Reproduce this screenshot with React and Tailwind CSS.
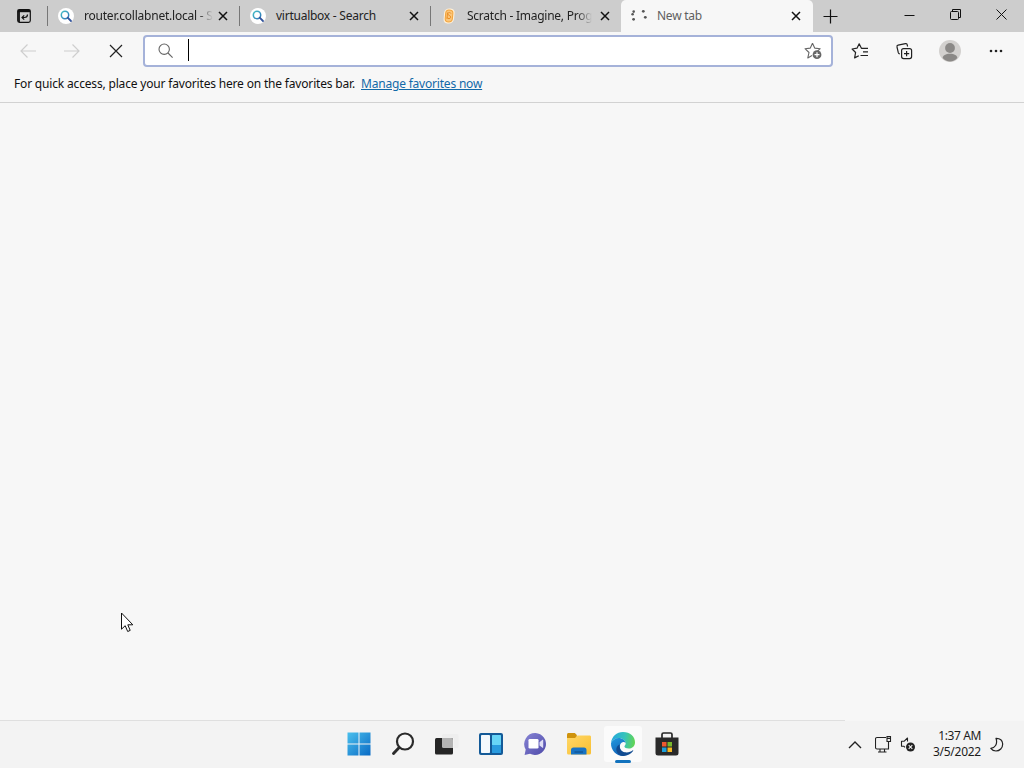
import clsx from "clsx";

const BingIcon = () => (
  <svg width="16" height="16" viewBox="0 0 16 16" fill="none">
    <defs>
      <linearGradient id="bing" x1="0" y1="0" x2="1" y2="1">
        <stop offset="0" stopColor="#45bfc6" />
        <stop offset="1" stopColor="#2f74b8" />
      </linearGradient>
    </defs>
    <circle cx="8" cy="8" r="8" fill="#fff" />
    <circle cx="7" cy="7" r="3.7" stroke="url(#bing)" strokeWidth="1.5" />
    <path d="M9.7 9.700l3.300 3.300" stroke="#33549c" strokeWidth="1.8" strokeLinecap="round" />
  </svg>
);

const ScratchIcon = () => (
  <svg width="16" height="16" viewBox="0 0 16 16" fill="none">
    <path
      d="M8.300.5c3.400 0 5.600 1.500 5.300 4.300l-.5 5.700c-.3 3.300-2.400 5-5.500 5-3.400 0-5.300-1.700-5-4.600L3.100 5C3.400 2.200 5.400.5 8.300.5z"
      fill="#fff0d8"
    />
    <path
      d="M7.900 2c2.700 0 4.200 1 4 3l-.5 5.500c-.2 2.500-1.600 3.500-3.700 3.500-2.500 0-3.700-1.200-3.500-3.200l.5-5.600C4.900 3 6.100 2 7.900 2z"
      fill="#fbc77c"
      stroke="#f2a53f"
      strokeWidth="1.100"
    />
    <path
      d="M10 5.600c-.3-1.400-3-1.500-3.200.1-.2 1.800 3 1.500 2.900 3.500-.1 1.900-3.300 1.800-3.500.2M6.500 4.500l-.5 6.500"
      stroke="#ec8f26"
      strokeWidth="1"
    />
  </svg>
);

const LoadingIcon = () => (
  <svg width="16" height="16" viewBox="0 0 16 16" fill="#555">
    <circle cx="2.700" cy="3.600" r="1.300" />
    <circle cx="1.600" cy="6.200" r="1.300" />
    <circle cx="2.600" cy="11.300" r="1.400" />
    <circle cx="12.300" cy="3.300" r="1.400" />
    <circle cx="14.300" cy="9.300" r="1.400" />
  </svg>
);

const CloseIcon = () => (
  <svg width="10" height="10" viewBox="0 0 10 10" stroke="#111" strokeWidth="1.500">
    <path d="M1 1l8 8M9 1L1 9" />
  </svg>
);

const tabs = [
  { title: "router.collabnet.local - S", icon: BingIcon, width: "w-[191px]", text: "tracking-[-0.22px] mask-r-from-88%" },
  { title: "virtualbox - Search", icon: BingIcon, width: "w-[190px]", text: "tracking-[-0.25px]" },
  { title: "Scratch - Imagine, Prog", icon: ScratchIcon, width: "w-[190px]", text: "tracking-[-0.25px] mask-r-from-88%" },
  { title: "New tab", icon: LoadingIcon, width: "w-[192px]", text: "tracking-[-0.25px]", active: true },
];

const Tab = ({ title, icon: Icon, width, text, active }) => (
  <div
    className={clsx(
      "flex items-center shrink-0 h-8 pl-[10px]",
      width,
      active ? "bg-[#f7f7f7] rounded-t-[5px] text-[#606060]" : "text-[#222]"
    )}
  >
    <Icon />
    <span className={clsx("ml-[10px] whitespace-nowrap text-[12px] leading-4", text)}>
      {title}
    </span>
    <span className={clsx("ml-auto", active ? "mr-[12px]" : "mr-[11px]")}>
      <CloseIcon />
    </span>
  </div>
);

const TabStrip = () => (
  <header className="flex items-center h-8 bg-[#cdcdcd]">
    <div className="flex justify-center w-[47px] shrink-0">
      <svg width="14" height="14" viewBox="0 0 14 14" fill="none" stroke="#111" strokeWidth="1.200">
        <rect x=".7" y=".7" width="12.600" height="12.600" rx="1.800" />
        <path d="M.7 2h12.600" strokeWidth="2.400" />
        <path d="M2 1v12" strokeWidth="1.800" />
        <path d="M10.500 5.500c0 2-1 3-3 3H5M7.200 6.300L5 8.500l2.200 2.200" strokeWidth="1.200" />
      </svg>
    </div>
    {tabs.map((tab) => (
      <div key={tab.title} className="flex items-center">
        {!tab.active && <span className="h-5 w-px bg-[#777]" />}
        <Tab {...tab} />
      </div>
    ))}
    <svg className="ml-[10px] shrink-0" width="15" height="15" viewBox="0 0 15 15" stroke="#111" strokeWidth="1.200">
      <path d="M7.500.5v14M.5 7.500h14" />
    </svg>
    <div className="flex ml-auto pb-[4px]">
      <div className="flex items-center justify-center w-[46px] h-7">
        <svg width="11" height="11" stroke="#111">
          <path d="M.5 6.500h10" />
        </svg>
      </div>
      <div className="flex items-center justify-center w-[46px] h-7">
        <svg width="11" height="11" fill="none" stroke="#111">
          <rect x=".5" y="2.500" width="8" height="8" rx="1" />
          <path d="M2.500 2.500v-2h8v8h-2" />
        </svg>
      </div>
      <div className="flex items-center justify-center w-[46px] h-7">
        <svg width="11" height="11" stroke="#111" strokeWidth="1">
          <path d="M.5.5l10 10M10.500.5l-10 10" />
        </svg>
      </div>
    </div>
  </header>
);

const Toolbar = () => (
  <div className="flex items-center h-[38px] pl-[6px]">
    <div className="flex justify-center w-11">
      <svg width="16" height="14" fill="none" stroke="#cecece" strokeWidth="1.200">
        <path d="M16 7H1M7.500.5L1 7l6.500 6.500" />
      </svg>
    </div>
    <div className="flex justify-center w-11">
      <svg width="16" height="14" fill="none" stroke="#cecece" strokeWidth="1.200">
        <path d="M0 7h15M8.500.5L15 7l-6.500 6.500" />
      </svg>
    </div>
    <div className="flex justify-center w-11">
      <svg width="14" height="14" stroke="#222" strokeWidth="1.200">
        <path d="M1 1l12 12M13 1L1 13" />
      </svg>
    </div>

    {/* Address bar */}
    <div className="flex items-center w-[690px] h-8 ml-[5px] pl-[13px] pr-[9px] bg-white border-2 border-[#a5b2d9] rounded-[4px]">
      <svg width="16" height="16" fill="none" stroke="#666" strokeWidth="1.100">
        <circle cx="6.200" cy="6.200" r="5.200" />
        <path d="M10 10l4.600 4.600" />
      </svg>
      <span className="ml-[14px] w-px h-[22px] mb-[2px] bg-black" />
      <svg className="ml-auto" width="18" height="18" viewBox="0 0 18 18" fill="none">
        <path
          d="M8.500 1.200l2.200 4.900 5.500.6-3.900 3.700M8.500 1.200L6.300 6.100l-5.300.6 4 3.800-1.200 5.400 4.200-2.300"
          stroke="#666"
          strokeWidth="1.100"
          strokeLinejoin="round"
        />
        <circle cx="13" cy="12.700" r="4.400" fill="#666" />
        <path d="M13 10.200v5M10.500 12.700h5" stroke="#fff" strokeWidth="1.200" />
      </svg>
    </div>

    <div className="flex justify-center w-[44px] ml-[5px]">
      <svg width="18" height="18" viewBox="0 0 18 18" fill="none" stroke="#222" strokeWidth="1.200" strokeLinejoin="round">
        <path d="M11 6.300l-.6-.1L8.200 1.800 6 6.200l-4.900.8 3.500 3.500-1 5.400 4.200-2.200" />
        <path d="M10.500 6.300h6.500M12 9.900h5M9.500 13.500h7.500" />
      </svg>
    </div>
    <div className="flex justify-center w-[44px]">
      <svg width="18" height="18" viewBox="0 0 18 18" fill="none" stroke="#222" strokeWidth="1.200">
        <rect x="6.600" y="6.600" width="10" height="10" rx="2" />
        <path d="M11.600 9v5.200M9 11.600h5.200" />
        <path d="M12.600 4.500l-.4-1.700c-.2-.9-.9-1.300-1.800-1.100L3.100 3.200c-.9.200-1.300.9-1.100 1.800l1.300 5.700c.2.700.6 1.100 1.500 1.200" />
      </svg>
    </div>
    <div className="flex justify-center w-[48px]">
      <svg width="22" height="22" viewBox="0 0 22 22">
        <circle cx="11" cy="11" r="11" fill="#d3d1cf" />
        <circle cx="11" cy="8" r="4.900" fill="#8b8987" />
        <path d="M3.700 18c0-2.500 3-4.200 7.300-4.200s7.300 1.700 7.300 4.200c-1.800 2.100-4.300 3.400-7.300 3.400S5.500 20.100 3.700 18z" fill="#8b8987" />
      </svg>
    </div>
    <div className="flex justify-center w-[44px]">
      <svg width="14" height="4" fill="#222">
        <circle cx="2" cy="2" r="1.300" />
        <circle cx="7" cy="2" r="1.300" />
        <circle cx="12" cy="2" r="1.300" />
      </svg>
    </div>
  </div>
);

const FavoritesBar = () => (
  <div className="flex h-[33px] pl-[14px] pt-[6px] border-b border-[#d2d2d2] text-[12px] leading-4 whitespace-nowrap">
    <span className="text-[#111] tracking-[-0.175px]">
      For quick access, place your favorites here on the favorites bar.
    </span>
    <a className="ml-[6px] text-[#1269a8] underline tracking-[-0.2px]">Manage favorites now</a>
  </div>
);

const StartIcon = () => (
  <svg width="24" height="24" viewBox="0 0 24 24">
    <defs>
      <linearGradient id="start" gradientUnits="userSpaceOnUse" x1="0" y1="0" x2="24" y2="24">
        <stop offset="0" stopColor="#4cc2ee" />
        <stop offset="1" stopColor="#0868c4" />
      </linearGradient>
    </defs>
    <path d="M.5.5h11v11H.5zM12.500.5h11v11h-11zM.5 12.500h11v11H.5zM12.500 12.500h11v11h-11z" fill="url(#start)" />
  </svg>
);

const SearchIcon = () => (
  <svg width="24" height="24" viewBox="0 0 24 24" fill="none" stroke="#2b2b2b">
    <circle cx="14" cy="9.500" r="8" strokeWidth="2.200" fill="#f8f8f8" />
    <path d="M8.200 15.500L2.500 21.500" strokeWidth="2.900" strokeLinecap="round" />
  </svg>
);

const TaskViewIcon = () => (
  <svg width="24" height="24" viewBox="0 0 24 24">
    <path d="M7 6V3.500A1.500 1.500 0 0 1 8.500 2h13.500A1.500 1.500 0 0 1 23.500 3.500v11a1.500 1.500 0 0 1-1.500 1.500h-3V6z" fill="#ebebeb" opacity=".7" />
    <rect x="0" y="6" width="18" height="16.500" rx="1.500" fill="#252525" />
    <path d="M7 6h9.500A1.500 1.500 0 0 1 18 7.500V16H8.500A1.500 1.500 0 0 1 7 14.500z" fill="#b3b3b3" />
  </svg>
);

const WidgetsIcon = () => (
  <svg width="26" height="24" viewBox="0 0 26 24">
    <rect x="1" y="1" width="24" height="22" rx="2" fill="#145a98" />
    <rect x="3" y="3" width="9" height="18" rx=".8" fill="#f4f9fd" />
    <rect x="14" y="3" width="9" height="10" rx=".5" fill="#67d5f7" />
    <rect x="14" y="13" width="9" height="8" rx=".5" fill="#299bdf" />
  </svg>
);

const ChatIcon = () => (
  <svg width="24" height="24" viewBox="0 0 24 24">
    <defs>
      <linearGradient id="chat" x1="0" y1="0" x2="1" y2="1">
        <stop offset="0" stopColor="#8784d4" />
        <stop offset="1" stopColor="#4e4aa9" />
      </linearGradient>
    </defs>
    <path d="M12.500 1A11 11 0 1 1 7 21.800L1.600 23l1.100-5.500A11 11 0 0 1 12.500 1z" fill="url(#chat)" />
    <rect x="5.500" y="7" width="10" height="9.500" rx="1.300" fill="#fff" />
    <path d="M16.500 10.200l3-2.400c.4-.3.700-.1.700.3v7.400c0 .4-.3.600-.7.300l-3-2.400z" fill="#dfdef6" />
  </svg>
);

const FolderIcon = () => (
  <svg width="26" height="24" viewBox="0 0 26 24">
    <defs>
      <linearGradient id="folder" x1="0" y1="0" x2="1" y2="1">
        <stop offset="0" stopColor="#ffd767" />
        <stop offset="1" stopColor="#f8bf32" />
      </linearGradient>
    </defs>
    <path d="M1 2.500C1 1.700 1.700 1 2.500 1h6.300l2 2v3H1z" fill="#cf930d" />
    <path d="M1 6h8l2.500-2.500H24A1.200 1.200 0 0 1 25 4.700V21a1.500 1.500 0 0 1-1.500 1.500h-21A1.500 1.500 0 0 1 1 21z" fill="url(#folder)" />
    <path d="M5 22.500V18a2.500 2.500 0 0 1 2.500-2.500h10.500a2.500 2.500 0 0 1 2.500 2.500v4.500z" fill="#1873c4" />
    <path d="M8.500 20h8.500" stroke="#125799" strokeWidth="1.500" />
  </svg>
);

const EdgeIcon = () => (
  <svg width="26" height="26" viewBox="0 0 26 26">
    <defs>
      <linearGradient id="edgeTop" x1="0" y1=".4" x2="1" y2=".5">
        <stop offset="0" stopColor="#25a7dc" />
        <stop offset=".55" stopColor="#36c3bb" />
        <stop offset="1" stopColor="#62d552" />
      </linearGradient>
      <linearGradient id="edgeSide" x1="0" y1="0" x2=".5" y2="1">
        <stop offset="0" stopColor="#229be0" />
        <stop offset="1" stopColor="#1160b5" />
      </linearGradient>
    </defs>
    <path d="M1 12C1.800 5.300 6.700 1 13 1c7.200 0 12 4.700 12 10.200 0 4-2.900 6.300-6.300 6.300-2.500 0-4.300-.9-4.300-2 0-.8 1.300-1.200 1.300-3C15.700 9.700 12.500 7 8.700 7 5 7 2.500 9.200 1 12z" fill="url(#edgeTop)" />
    <path d="M1 12C2.500 9 5.200 7 8.700 7c3.700 0 6.700 2.400 6.900 5.200-.6-1-1.500-1.400-2.500-1.200-2.500.6-3.600 3-3.200 5.400.5 3.500 3.700 6.600 8 6.500A12 12 0 0 1 13 25C6.300 25 .7 19.300 1 12z" fill="url(#edgeSide)" />
    <path d="M9.800 13.500C8.900 17 11 20.800 15 21.300c3.600.5 6-1 7.500-1.900.5-.3 1 .2.600.7C21 23 17.500 25 13.500 25 8.500 24.800 5.500 20.500 6.500 17c.6-2 1.800-3 3.300-3.500z" fill="#114b91" />
  </svg>
);

const StoreIcon = () => (
  <svg width="24" height="26" viewBox="0 0 24 26">
    <path d="M7 8V3.500A1.500 1.500 0 0 1 8.500 2h7A1.500 1.500 0 0 1 17 3.500V8" fill="none" stroke="#272727" strokeWidth="1.700" />
    <path d="M.5 6.500h23V22a2.500 2.500 0 0 1-2.500 2.500H3A2.500 2.500 0 0 1 .5 22z" fill="#292929" />
    <path d="M7 11h4.500v4.500H7z" fill="#ed5931" />
    <path d="M12.500 11H17v4.500h-4.500z" fill="#79b82c" />
    <path d="M7 16.500h4.500V21H7z" fill="#1ba0dc" />
    <path d="M12.500 16.500H17V21h-4.500z" fill="#f6b922" />
  </svg>
);

const apps = [
  { name: "start", icon: StartIcon },
  { name: "search", icon: SearchIcon },
  { name: "task-view", icon: TaskViewIcon },
  { name: "widgets", icon: WidgetsIcon },
  { name: "chat", icon: ChatIcon },
  { name: "explorer", icon: FolderIcon },
  { name: "edge", icon: EdgeIcon, active: true },
  { name: "store", icon: StoreIcon },
];

const Taskbar = () => (
  <footer className="flex h-12 bg-[#f3f3f3]">
    <div className="flex items-center w-[845px] pl-[337px] pb-[2px] border-t border-[#dfdfdf]">
      {apps.map(({ name, icon: Icon, active }) => (
        <div key={name} className="flex justify-center w-[44px] shrink-0">
          <div
            className={clsx(
              "relative flex items-center justify-center w-[38px] h-9 rounded-[3px]",
              active && "bg-[#fbfbfb]"
            )}
          >
            <Icon />
            {active && (
              <span className="absolute bottom-[-1px] left-[11px] w-4 h-[3px] rounded-full bg-[#1272bd]" />
            )}
          </div>
        </div>
      ))}
    </div>

    {/* System tray */}
    <div className="flex items-center flex-1 pl-[3px] border-t border-[#f6f6f6]">
      <svg width="14" height="8" fill="none" stroke="#222" strokeWidth="1.400">
        <path d="M1 7l6-6 6 6" />
      </svg>
      <svg className="ml-[13px]" width="17" height="17" viewBox="0 0 17 17" fill="none" stroke="#222" strokeWidth="1.100">
        <path d="M11 1.500H2a1.500 1.500 0 0 0-1.500 1.500v8.500A1.500 1.500 0 0 0 2 13h11.500V6M5 13v3M9.500 13v3M3 16h8.500" />
        <path d="M12 .6h3.500v4.900H12zM12 2.500h3.500" />
      </svg>
      <svg className="ml-[8px]" width="16" height="15" viewBox="0 0 16 15" fill="none" stroke="#222" strokeWidth="1.100">
        <path d="M7.500 4.500V1L4 4.300H1.500v5H4l1 1" strokeLinejoin="round" />
        <circle cx="10.500" cy="10" r="4.500" fill="#222" stroke="none" />
        <path d="M8.700 8.200l3.600 3.600M12.300 8.200l-3.600 3.600" stroke="#f3f3f3" />
      </svg>
      <div className="flex flex-col items-end w-[65px] pb-px text-[12px] leading-4 text-[#1c1c1c] whitespace-nowrap">
        <span className="tracking-[-0.4px]">1:37 AM</span>
        <span className="tracking-[-0.25px]">3/5/2022</span>
      </div>
      <svg className="ml-[9px]" width="14" height="16" viewBox="0 0 14 16" fill="none" stroke="#222" strokeWidth="1.200" strokeLinejoin="round">
        <path d="M6 1.300c4-.2 6.700 2.300 6.700 5.700 0 4-3 7-6.700 7-2.300 0-4-.9-5.200-2.600C4.700 10.800 8 7.500 6 1.300z" />
      </svg>
    </div>
  </footer>
);

const App = () => (
  <div className="relative flex flex-col w-[1024px] h-[768px] overflow-hidden bg-[#f7f7f7] font-['Noto_Sans','Open_Sans',sans-serif]">
    <TabStrip />
    <Toolbar />
    <FavoritesBar />
    <main className="flex-1" />
    <Taskbar />

    {/* Mouse pointer */}
    <svg className="absolute left-[121px] top-[612px]" width="13" height="21" viewBox="0 0 13 21">
      <path
        d="M.5 1v16.200l3.700-3.500L6.700 19.500l2.500-1.100-2.400-5.600h5z"
        fill="#fff"
        stroke="#111"
        strokeLinejoin="round"
      />
    </svg>
  </div>
);

export default App;
